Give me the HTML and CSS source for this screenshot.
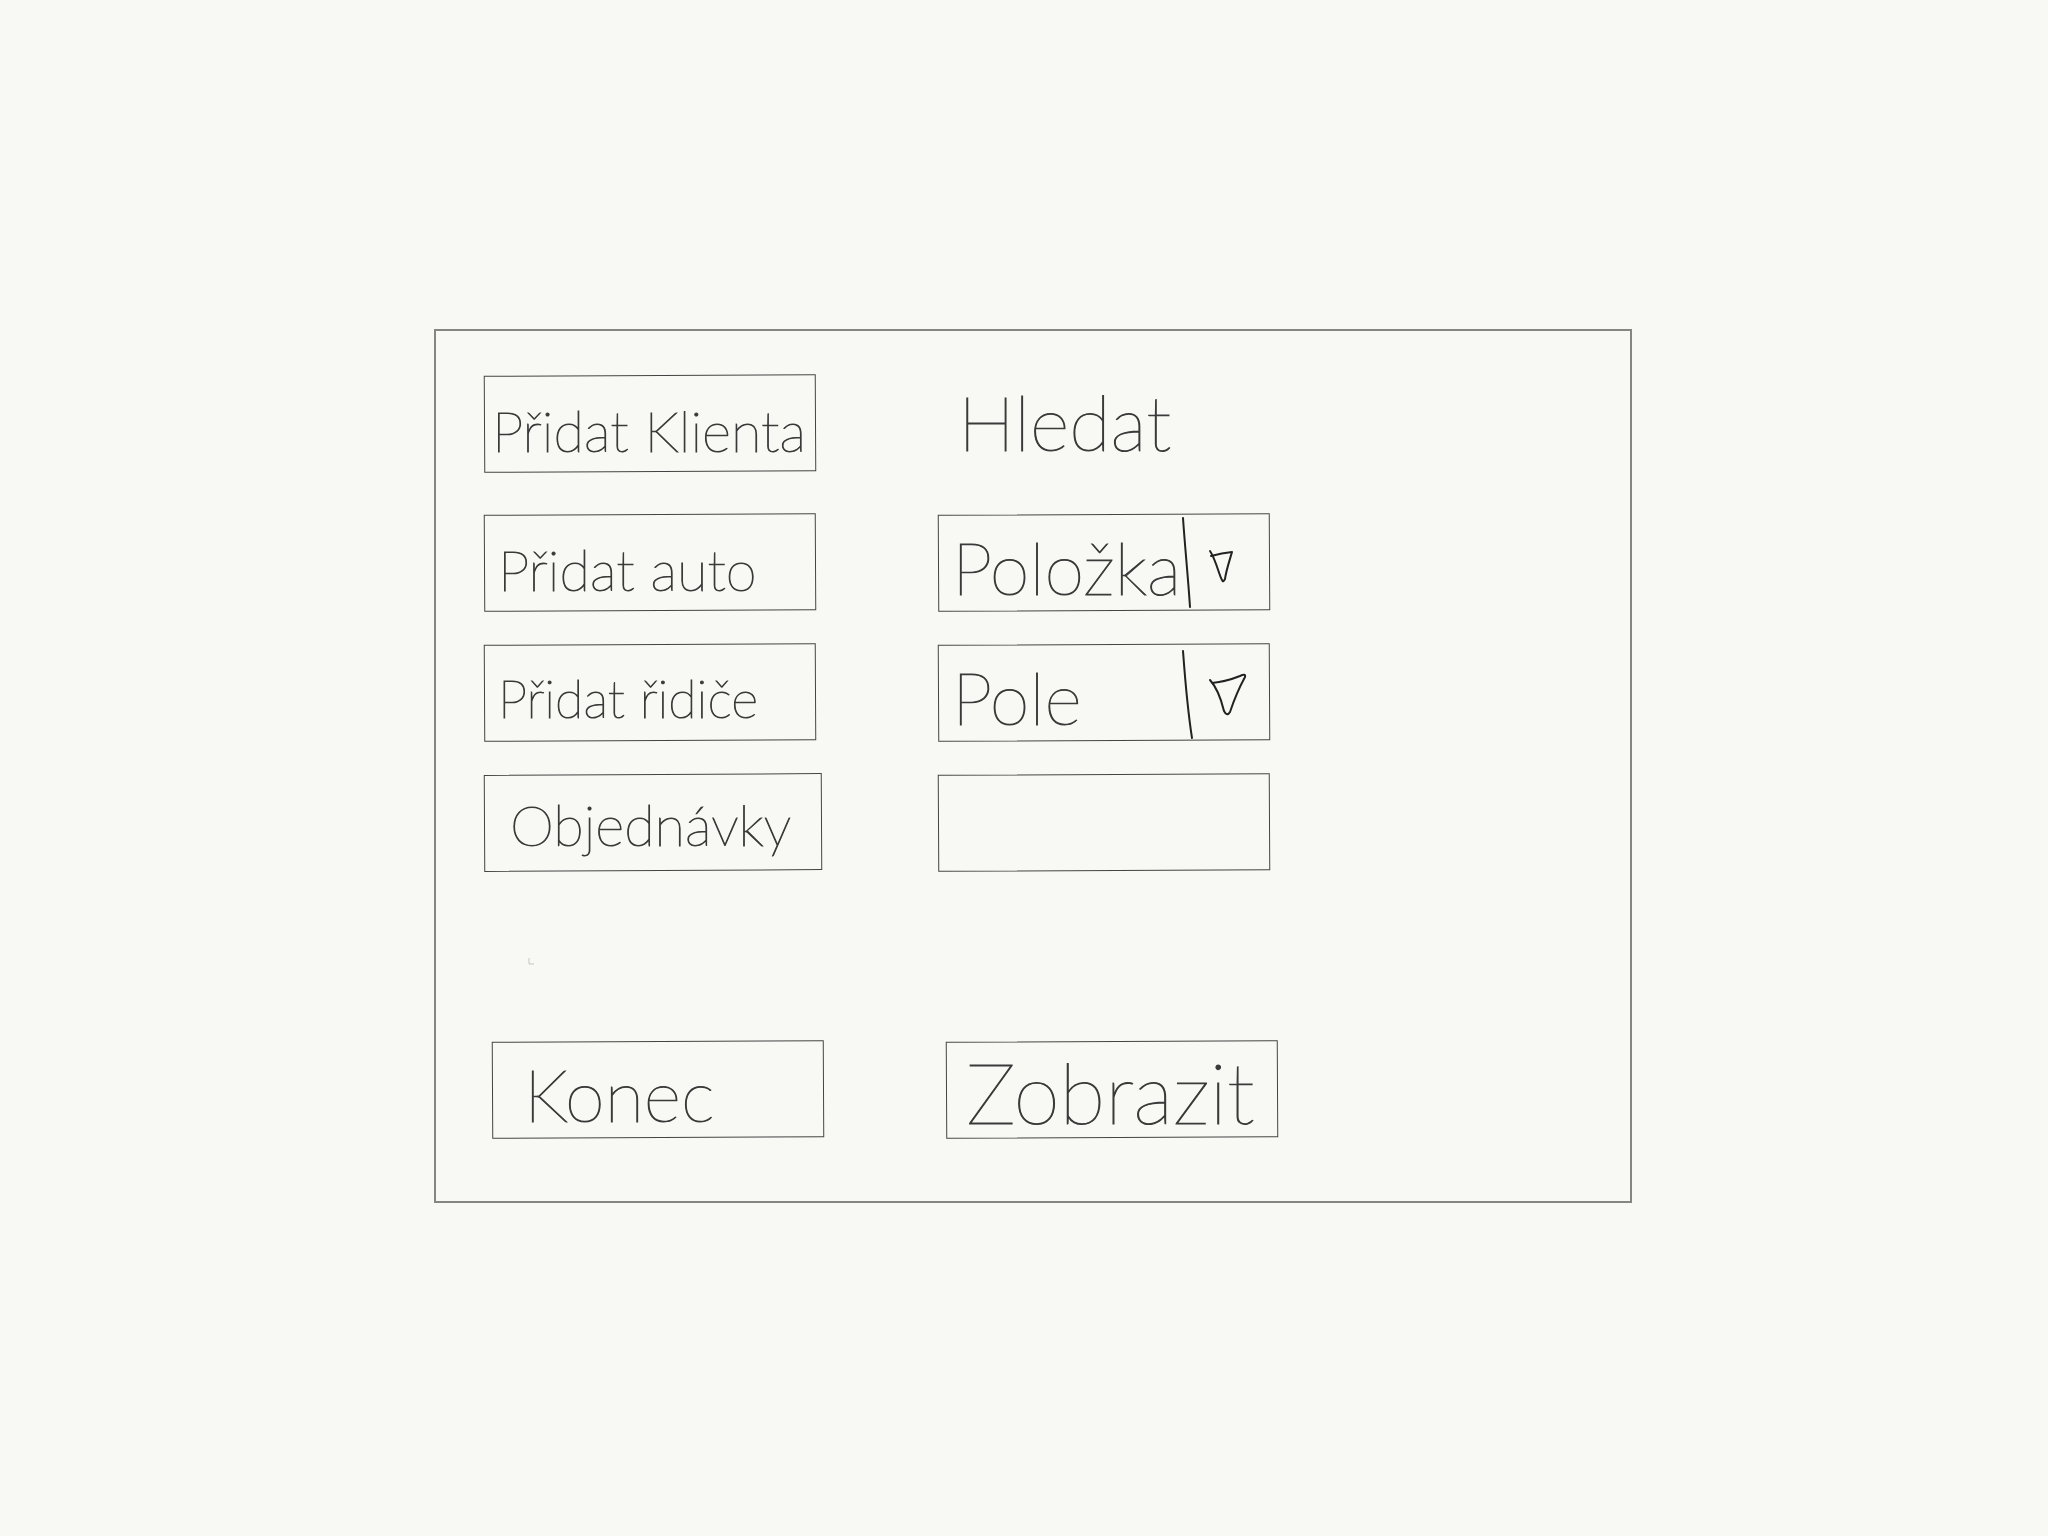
FILE: index.html
```html
<!DOCTYPE html>
<html lang="cs">
<head>
<meta charset="utf-8">
<meta name="viewport" content="width=device-width, initial-scale=1">
<title>Přidat klienta</title>
<link rel="stylesheet" href="styles.css">
</head>
<body>
<main class="window">
  <div class="row row-head">
    <div class="cell"><button class="box text-m inset-s" type="button">Přidat Klienta</button></div>
    <div class="cell"><h1 class="title">Hledat</h1></div>
  </div>
  <div class="row">
    <div class="cell"><button class="box text-m inset-m" type="button">Přidat auto</button></div>
    <div class="cell">
      <div class="box field">
        <select class="select text-l" aria-label="Položka"><option>Položka</option></select>
        <svg class="arrow" viewBox="0 0 90 97" aria-hidden="true">
          <path d="M3 4C5 34 8 62 10 93"/>
          <path d="M30 37C36 46 39 61 42 66Q43 69 45 65C46 57 50 45 52 38Q42 39 31 42"/>
        </svg>
      </div>
    </div>
  </div>
  <div class="row">
    <div class="cell"><button class="box text-s inset-m" type="button">Přidat řidiče</button></div>
    <div class="cell">
      <div class="box field">
        <select class="select text-l" aria-label="Pole"><option>Pole</option></select>
        <svg class="arrow" viewBox="0 0 90 97" aria-hidden="true">
          <path d="M3 7C5 34 7 62 12 94"/>
          <path d="M30 36C39 46 42 59 44 67Q47 73 50 68C53 59 59 44 65 33Q66 29 60 32C50 36 42 38 32 39"/>
        </svg>
      </div>
    </div>
  </div>
  <div class="row">
    <div class="cell"><button class="box box-wide text-s text-orders inset-xl" type="button">Objednávky</button></div>
    <div class="cell"><div class="box field"><input class="input text-l" type="text" aria-label="Hledaný text"></div></div>
  </div>
  <div class="note">
    <svg class="speck" viewBox="0 0 10 12" aria-hidden="true"><path d="M1 4V10H6"/></svg>
  </div>
  <div class="row row-foot">
    <div class="cell"><button class="box text-l inset-xxl" type="button">Konec</button></div>
    <div class="cell"><button class="box text-xl inset-l" type="button">Zobrazit</button></div>
  </div>
</main>
</body>
</html>
```
FILE: styles.css
```css
* { box-sizing: border-box; }

body {
  margin: 0;
  padding: 329px 416px 32px 434px;
  background: #f8f9f4;
  color: #3a3a3a;
  font-family: Lato, "Open Sans", sans-serif;
  font-weight: 100;
  -webkit-text-stroke: 1px #3a3a3a;
}

.window {
  padding: 44px 48px 63px 48px;
  border: 2px solid #858581;
}

.row {
  display: flex;
  gap: 122px;
  margin-bottom: 33px;
}

.row-head { margin-bottom: 42px; }
.row-foot { margin: 0; padding-left: 8px; }

.cell { width: 332px; }

.box {
  position: relative;
  display: block;
  width: 100%;
  height: 97px;
  margin: 0;
  padding: 0;
  border: 0;
  background: none;
  color: inherit;
  font-family: inherit;
  font-weight: inherit;
  text-align: left;
  white-space: nowrap;
}

/* hand-ruled frame, leaning up slightly to the right */
.box::before {
  content: "";
  position: absolute;
  inset: 0;
  border: 1px solid #444;
  transform: rotate(-0.3deg);
  pointer-events: none;
}

.box-wide { width: 338px; }

.text-s { padding-top: 10px; font-size: 52px; }
.text-m { padding-top: 14px; font-size: 56px; }
.text-l { padding-top: 8px; font-size: 72px; }
.text-xl { font-size: 84px; }
.text-orders { padding-top: 4px; font-size: 56px; }

.inset-s { padding-left: 8px; }
.inset-m { padding-left: 14px; }
.inset-l { padding-left: 20px; }
.inset-xl { padding-left: 26px; }
.inset-xxl { padding-left: 32px; }

.title {
  margin: 0;
  padding-left: 20px;
  font-size: 76px;
  line-height: 93px;
  font-weight: inherit;
}

.field {
  display: grid;
  grid-template-columns: 1fr 90px;
}

.select,
.input {
  grid-column: 1 / 3;
  grid-row: 1;
  width: 100%;
  height: 97px;
  margin: 0;
  padding: 8px 14px 0;
  border: 0;
  outline: 0;
  appearance: none;
  background: none;
  color: inherit;
  font-family: inherit;
  font-weight: inherit;
}

.arrow {
  grid-column: 2;
  grid-row: 1;
  width: 90px;
  height: 97px;
  fill: none;
  stroke: #222;
  stroke-width: 2;
  stroke-linecap: round;
  stroke-linejoin: round;
  pointer-events: none;
}

.note {
  height: 137px;
  padding: 50px 0 0 44px;
}

.speck {
  display: block;
  width: 10px;
  height: 12px;
  fill: none;
  stroke: #c4c4c0;
}
```
